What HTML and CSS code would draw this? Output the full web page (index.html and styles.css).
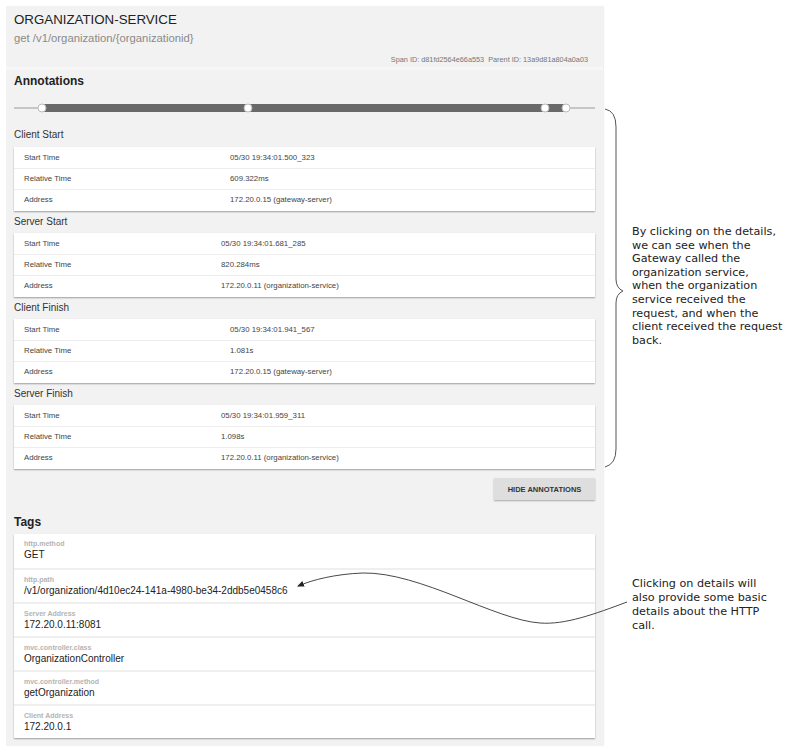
FILE: index.html
```html
<!DOCTYPE html>
<html>
<head>
<meta charset="utf-8">
<link rel="stylesheet" href="styles.css">
</head>
<body>
<div class="page">
  <div class="panel">
    <div class="header">
      <div class="title">ORGANIZATION-SERVICE</div>
      <div class="subtitle">get /v1/organization/{organizationid}</div>
      <div class="ids">Span ID: d81fd2564e66a553&nbsp;&nbsp;Parent ID: 13a9d81a804a0a03</div>
    </div>
    <div class="body">
      <div class="heading">Annotations</div>
      <svg class="timeline" width="581" height="12" viewBox="0 0 581 12">
        <line x1="0" y1="6" x2="28" y2="6" stroke="#9a9a9a" stroke-width="1"/>
        <line x1="552" y1="6" x2="581" y2="6" stroke="#9a9a9a" stroke-width="1"/>
        <rect x="28" y="2" width="524" height="8" fill="#696969"/>
        <circle cx="28" cy="6" r="4" fill="#fff" stroke="#bbb" stroke-width="1"/>
        <circle cx="234" cy="6" r="4" fill="#fff" stroke="#bbb" stroke-width="1"/>
        <circle cx="531" cy="6" r="4" fill="#fff" stroke="#bbb" stroke-width="1"/>
        <circle cx="552" cy="6" r="4" fill="#fff" stroke="#bbb" stroke-width="1"/>
      </svg>

      <div class="section first">Client Start</div>
      <div class="card wide">
        <div class="row"><span>Start Time</span><span>05/30 19:34:01.500_323</span></div>
        <div class="row"><span>Relative Time</span><span>609.322ms</span></div>
        <div class="row"><span>Address</span><span>172.20.0.15 (gateway-server)</span></div>
      </div>

      <div class="section">Server Start</div>
      <div class="card narrow">
        <div class="row"><span>Start Time</span><span>05/30 19:34:01.681_285</span></div>
        <div class="row"><span>Relative Time</span><span>820.284ms</span></div>
        <div class="row"><span>Address</span><span>172.20.0.11 (organization-service)</span></div>
      </div>

      <div class="section">Client Finish</div>
      <div class="card wide">
        <div class="row"><span>Start Time</span><span>05/30 19:34:01.941_567</span></div>
        <div class="row"><span>Relative Time</span><span>1.081s</span></div>
        <div class="row"><span>Address</span><span>172.20.0.15 (gateway-server)</span></div>
      </div>

      <div class="section">Server Finish</div>
      <div class="card narrow">
        <div class="row"><span>Start Time</span><span>05/30 19:34:01.959_311</span></div>
        <div class="row"><span>Relative Time</span><span>1.098s</span></div>
        <div class="row"><span>Address</span><span>172.20.0.11 (organization-service)</span></div>
      </div>

      <div class="actions"><button class="btn">HIDE ANNOTATIONS</button></div>

      <div class="heading tags-heading">Tags</div>
      <div class="tags">
        <div class="tag"><div class="tag-key">http.method</div><div class="tag-val">GET</div></div>
        <div class="tag"><div class="tag-key">http.path</div><div class="tag-val">/v1/organization/4d10ec24-141a-4980-be34-2ddb5e0458c6</div></div>
        <div class="tag"><div class="tag-key">Server Address</div><div class="tag-val">172.20.0.11:8081</div></div>
        <div class="tag"><div class="tag-key">mvc.controller.class</div><div class="tag-val">OrganizationController</div></div>
        <div class="tag"><div class="tag-key">mvc.controller.method</div><div class="tag-val">getOrganization</div></div>
        <div class="tag"><div class="tag-key">Client Address</div><div class="tag-val">172.20.0.1</div></div>
      </div>
    </div>
  </div>

  <div class="notes">
    <p class="note note-top">By clicking on the details,<br>we can see when the<br>Gateway called the<br>organization service,<br>when the organization<br>service received the<br>request, and when the<br>client received the request<br>back.</p>
    <p class="note note-bottom">Clicking on details will<br>also provide some basic<br>details about the HTTP<br>call.</p>
  </div>

  <svg class="overlay" width="793" height="750" viewBox="0 0 793 750">
    <defs>
      <marker id="ah" markerWidth="8" markerHeight="8" refX="6" refY="4" orient="auto" markerUnits="userSpaceOnUse">
        <path d="M0,1 L7,4 L0,7 Z" fill="#222"/>
      </marker>
    </defs>
    <path d="M605,109 Q616,111 616,127 L616,279 Q616,288 623,291 Q616,294 616,303 L616,449 Q616,464 605,467" fill="none" stroke="#555" stroke-width="1"/>
    <path d="M627,602 C595,614 565,625 540,623 C495,620 420,572 363,573 C335,574 312,580 298,586" fill="none" stroke="#333" stroke-width="0.9" marker-end="url(#ah)"/>
  </svg>
</div>
</body>
</html>
```

FILE: styles.css
```css
html, body {
  margin: 0;
  padding: 0;
  background: #ffffff;
}

.page {
  position: relative;
  display: flex;
  align-items: flex-start;
  width: 793px;
  height: 750px;
  padding: 6px 0 0 6px;
  box-sizing: border-box;
  font-family: "Liberation Sans", Arial, sans-serif;
  color: #333;
}

.panel {
  width: 597px;
  background: #f2f2f2;
  box-shadow: 1px 0 1px rgba(0, 0, 0, 0.06);
  padding-bottom: 8px;
}

.header {
  padding: 6px 8px 2px 8px;
  border-bottom: 3px solid #f7f7f7;
}

.title {
  font-size: 13.3px;
  line-height: 16px;
  color: #222;
}

.subtitle {
  margin-top: 3px;
  font-size: 11.3px;
  line-height: 14px;
  color: #8a8a8a;
}

.ids {
  margin-top: 10px;
  text-align: right;
  font-size: 7.3px;
  line-height: 10px;
  color: #777;
  padding-right: 7px;
}

.body {
  padding: 0 8px;
}

.heading {
  margin-top: 4px;
  font-size: 12px;
  line-height: 14px;
  font-weight: bold;
  color: #222;
}

.timeline {
  display: block;
  margin-top: 14px;
}

.section {
  font-size: 10px;
  line-height: 22px;
  height: 22px;
  color: #333;
}

.section.first {
  margin-top: 10px;
  height: 23px;
  line-height: 22px;
}

.card {
  background: #ffffff;
  box-shadow: 0 1px 1.5px rgba(0, 0, 0, 0.35);
  padding-bottom: 1px;
}

.row {
  display: grid;
  height: 21px;
  box-sizing: border-box;
  align-items: center;
  padding-left: 10px;
  padding-bottom: 1px;
  font-size: 7.8px;
  color: #444;
}

.row + .row {
  border-top: 1px solid #ededed;
}

.card.wide .row {
  grid-template-columns: 206px 1fr;
}

.card.narrow .row {
  grid-template-columns: 197px 1fr;
}

.actions {
  display: flex;
  justify-content: flex-end;
  margin-top: 9px;
}

.btn {
  width: 101px;
  height: 22px;
  border: none;
  background: #dedede;
  box-shadow: 0 1px 1.5px rgba(0, 0, 0, 0.3);
  font-family: "Liberation Sans", Arial, sans-serif;
  font-size: 7.5px;
  font-weight: bold;
  color: #333;
  padding: 0;
}

.tags-heading {
  margin-top: 13px;
  line-height: 18px;
  margin-bottom: 3px;
}

.tags {
  background: #ffffff;
  box-shadow: 0 1px 1.5px rgba(0, 0, 0, 0.35);
}

.tag {
  height: 34px;
  box-sizing: border-box;
  padding: 5px 10px 0 10px;
}

.tag + .tag {
  border-top: 2px solid #efefef;
}

.tag-key {
  font-size: 7px;
  line-height: 10px;
  font-weight: bold;
  color: #b4b4b4;
}

.tag-val {
  font-size: 10px;
  line-height: 12px;
  color: #222;
}

.notes {
  flex: 1;
  padding-left: 29px;
}

.note {
  margin: 0;
  font-family: "DejaVu Sans", Verdana, sans-serif;
  font-size: 11.2px;
  line-height: 13.6px;
  color: #222;
}

.note-top {
  margin-top: 219px;
}

.note-bottom {
  margin-top: 230px;
  line-height: 14px;
}

.overlay {
  position: absolute;
  left: 0;
  top: 0;
  pointer-events: none;
}
```
